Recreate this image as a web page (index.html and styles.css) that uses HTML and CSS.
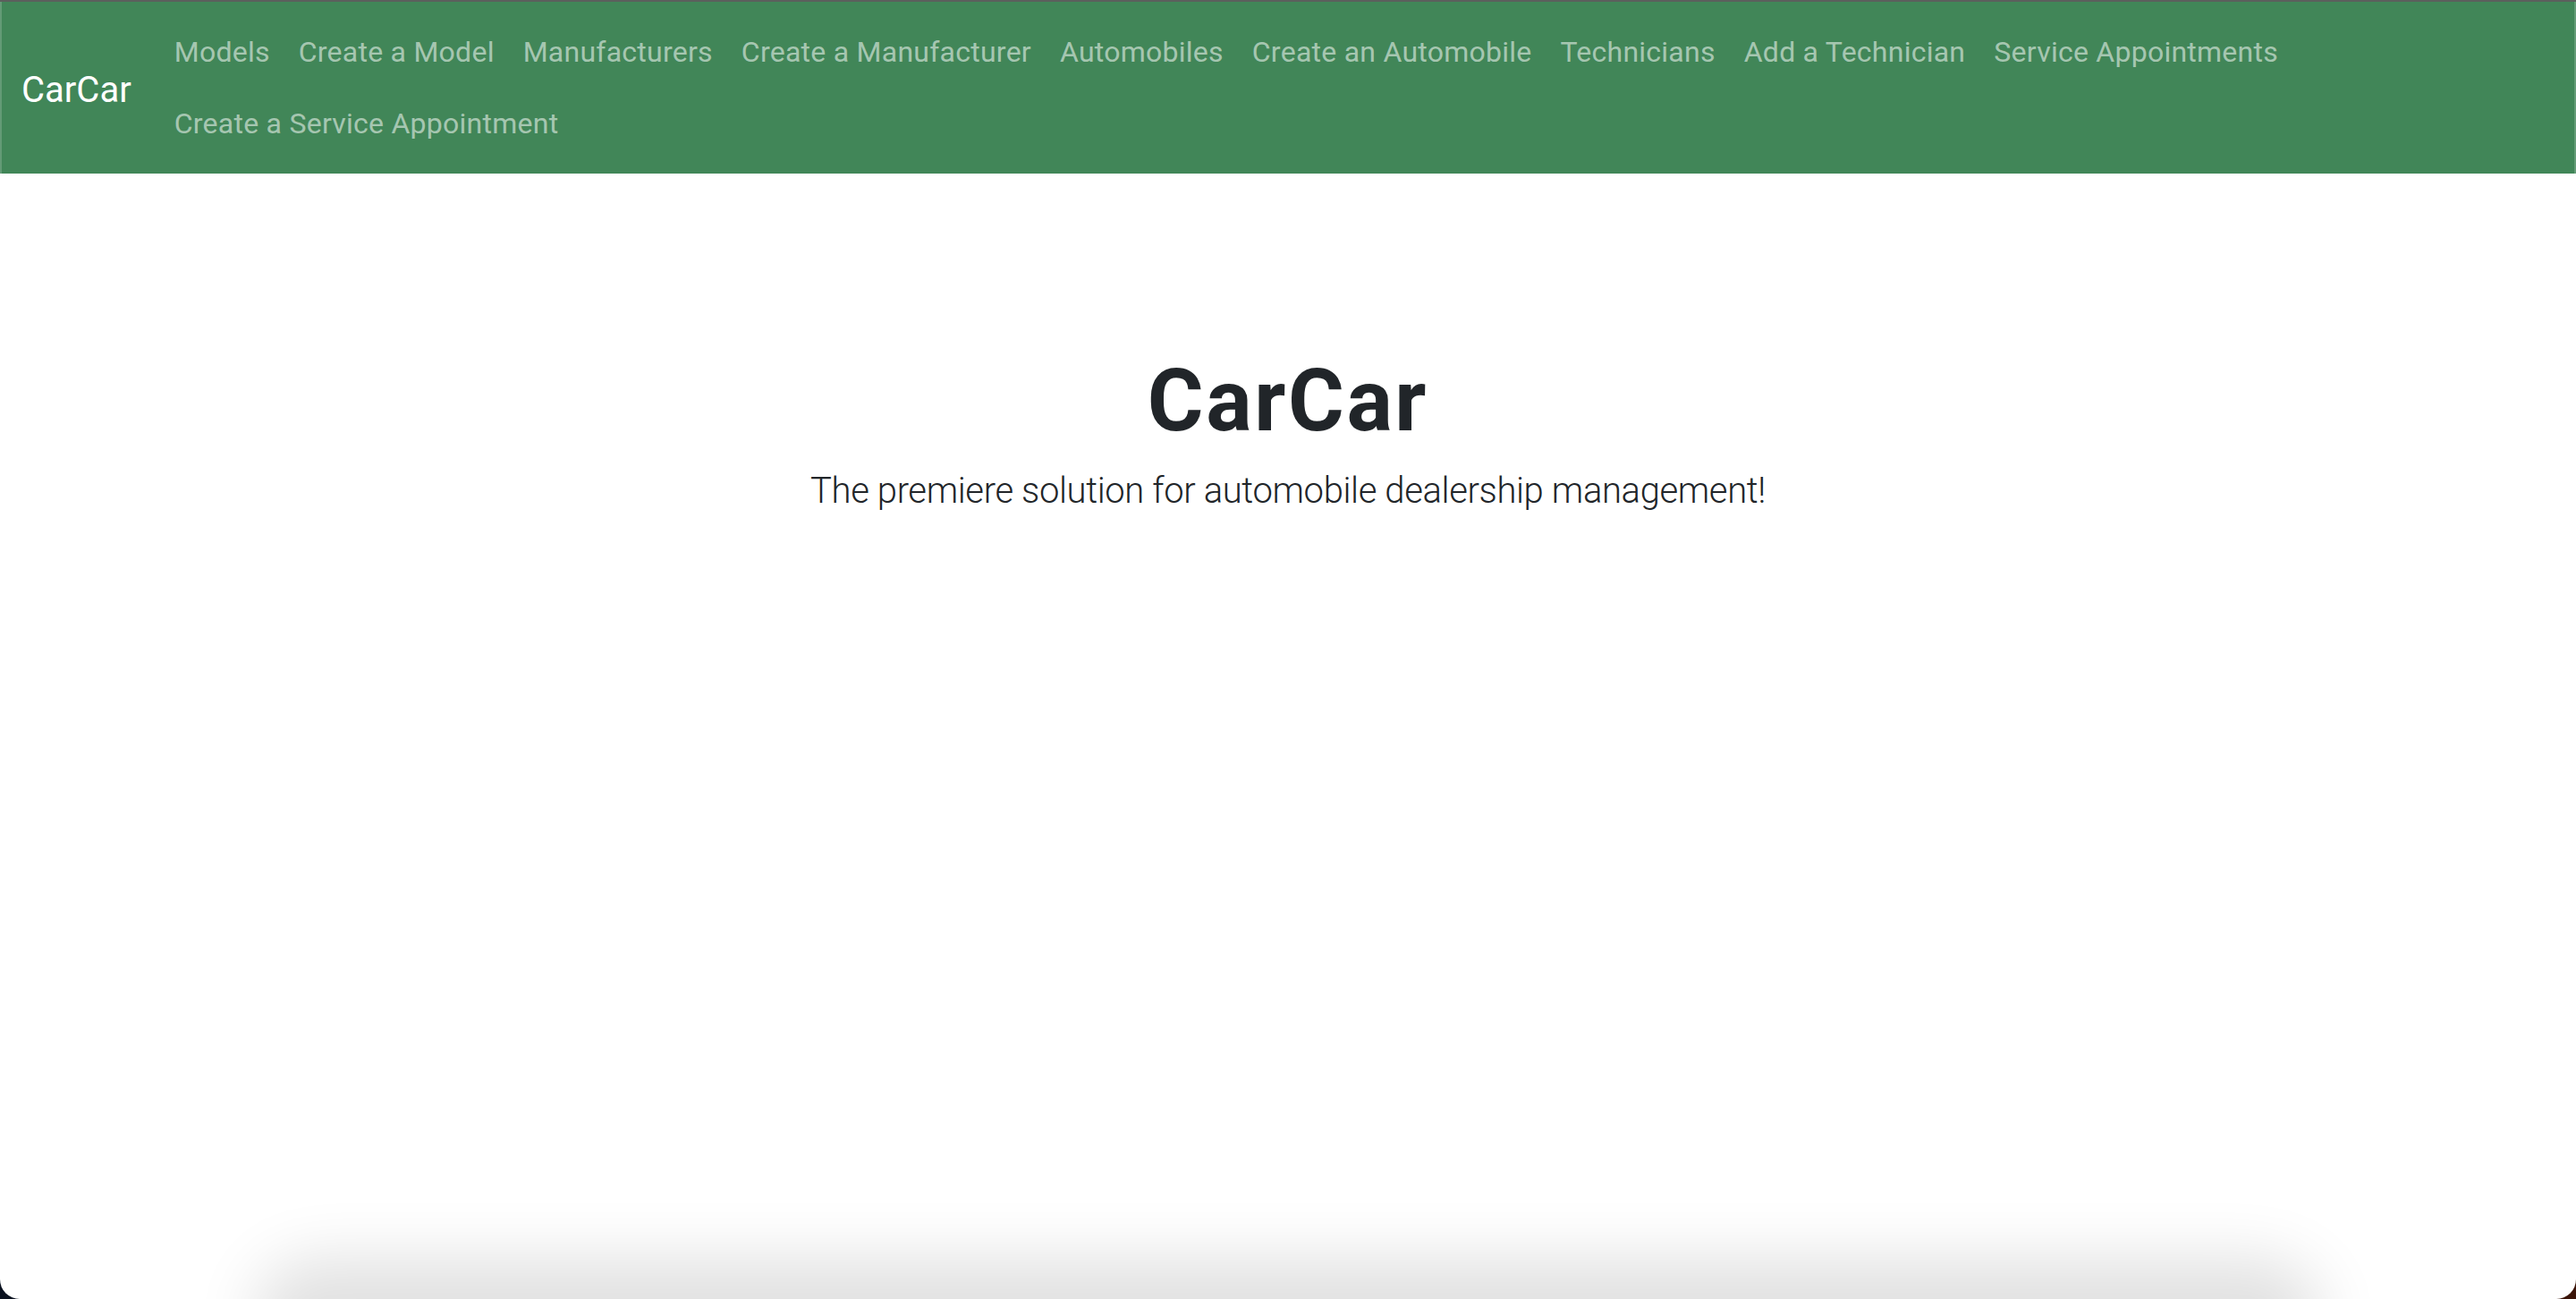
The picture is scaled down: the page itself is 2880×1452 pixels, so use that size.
FILE: index.html
```html
<!DOCTYPE html>
<html lang="en">
<head>
<meta charset="utf-8">
<title>CarCar</title>
<link rel="stylesheet" href="styles.css">
</head>
<body>
<div class="window">
  <nav class="navbar">
    <a class="brand" href="#">CarCar</a>
    <ul class="nav-list">
      <li><a class="nav-link" href="#">Models</a></li>
      <li><a class="nav-link" href="#">Create a Model</a></li>
      <li><a class="nav-link" href="#">Manufacturers</a></li>
      <li><a class="nav-link" href="#">Create a Manufacturer</a></li>
      <li><a class="nav-link" href="#">Automobiles</a></li>
      <li><a class="nav-link" href="#">Create an Automobile</a></li>
      <li><a class="nav-link" href="#">Technicians</a></li>
      <li><a class="nav-link" href="#">Add a Technician</a></li>
      <li><a class="nav-link" href="#">Service Appointments</a></li>
      <li><a class="nav-link" href="#">Create a Service Appointment</a></li>
    </ul>
  </nav>
  <main class="hero">
    <h1 class="hero-title">CarCar</h1>
    <p class="lead">The premiere solution for automobile dealership management!</p>
  </main>
  <div class="dock-shadow"></div>
</div>
</body>
</html>
```

FILE: styles.css
```css
* { box-sizing: border-box; }
html, body { height: 100%; }
body {
  margin: 0;
  background: linear-gradient(to right, #0b1220 0%, #1a1418 50%, #3b1408 100%);
  font-family: Roboto, "Liberation Sans", Arial, sans-serif;
}
.window {
  position: relative;
  height: 100%;
  background: #ffffff;
  border-radius: 0 0 22px 22px;
  overflow: hidden;
  display: flex;
  flex-direction: column;
}
.navbar {
  display: flex;
  align-items: center;
  background: #418658;
  border-top: 2px solid #5c5f5d;
  box-shadow: inset 2px 0 0 rgba(255,255,255,0.18), inset -2px 0 0 rgba(255,255,255,0.18);
  padding: 16px 24px;
}
.brand {
  color: #ffffff;
  text-decoration: none;
  font-size: 40px;
  line-height: 60px;
  padding: 13px 0 7px;
  margin-right: 32px;
  white-space: nowrap;
}
.nav-list {
  display: flex;
  flex-wrap: wrap;
  list-style: none;
  margin: 0;
  padding: 0;
  flex: 1;
}
.nav-link {
  display: block;
  padding: 16px;
  font-size: 32px;
  line-height: 48px;
  letter-spacing: 0.25px;
  color: rgba(255,255,255,0.55);
  text-decoration: none;
  white-space: nowrap;
}
.hero {
  padding: 197px 48px 0;
  text-align: center;
  color: #212529;
}
.hero-title {
  margin: 0 0 13px;
  font-size: 96px;
  line-height: 1.2;
  font-weight: 700;
  letter-spacing: 2.6px;
}
.lead {
  margin: 0 auto 32px;
  max-width: 1296px;
  font-size: 40px;
  line-height: 1.5;
  font-weight: 300;
  letter-spacing: -0.38px;
}
.dock-shadow {
  position: absolute;
  left: 330px;
  right: 330px;
  bottom: -50px;
  height: 50px;
  background: rgba(0,0,0,0.12);
  box-shadow: 0 0 70px 45px rgba(0,0,0,0.12);
  border-radius: 40px;
}
```
